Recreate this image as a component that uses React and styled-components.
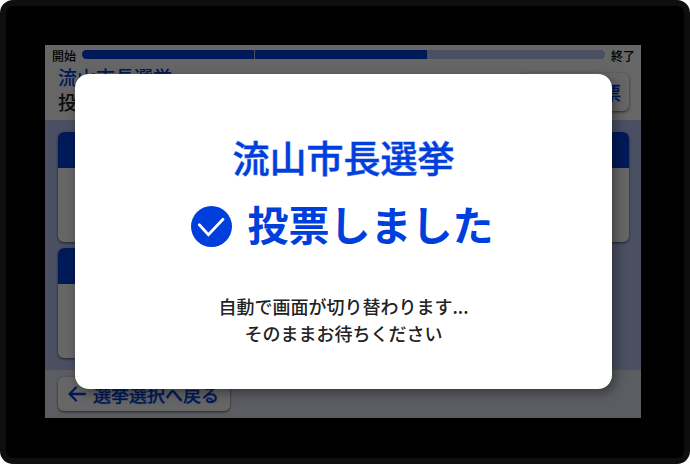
import React from 'react'
import styled, { createGlobalStyle } from 'styled-components'

const BLUE = '#003fdc'

const steps = [
  { share: 33, done: true },
  { share: 33, done: true },
  { share: 34, done: false }
]

const candidates = [1, 2, 3, 4, 5]

const CheckIcon = () => (
  <Check width="41" height="41" viewBox="0 0 41 41" aria-hidden="true">
    <circle cx="20.5" cy="20.5" r="20.5" fill={BLUE} />
    <path
      d="M8.3 18.8L17.4 28.6L32 13.2"
      fill="none"
      stroke="#fff"
      strokeWidth="2.8"
      strokeLinecap="round"
    />
  </Check>
)

const BackIcon = () => (
  <svg width="18" height="16" viewBox="0 0 18 16" aria-hidden="true">
    <path
      d="M8 1.5L1.6 8L8 14.5M1.6 8H16.8"
      fill="none"
      stroke={BLUE}
      strokeWidth="2.3"
      strokeLinecap="round"
      strokeLinejoin="round"
    />
  </svg>
)

const App = () => (
  <Device>
    <GlobalStyle />
    <Screen>
      <Header>
        <Progress>
          <span>開始</span>
          <Track>
            {steps.map((step, i) => (
              <Step key={i} $share={step.share} $done={step.done} />
            ))}
          </Track>
          <span>終了</span>
        </Progress>
        <HeaderRow>
          <Heading>
            <Election>流山市長選挙</Election>
            <Guide>投票先を選んでください</Guide>
          </Heading>
          <BlankButton>白票で投票</BlankButton>
        </HeaderRow>
      </Header>
      <Candidates>
        {candidates.map(id => (
          <Card key={id}>
            <CardHead />
          </Card>
        ))}
      </Candidates>
      <Footer>
        <BackButton>
          <BackIcon />
          選挙選択へ戻る
        </BackButton>
      </Footer>
      <Overlay>
        <Modal role="dialog" aria-modal="true" aria-labelledby="result">
          <ModalTitle>流山市長選挙</ModalTitle>
          <Result id="result">
            <CheckIcon />
            投票しました
          </Result>
          <Note>
            自動で画面が切り替わります...
            <br />
            そのままお待ちください
          </Note>
        </Modal>
      </Overlay>
    </Screen>
  </Device>
)

export default App

const GlobalStyle = createGlobalStyle`
  * {
    box-sizing: border-box;
  }
  body {
    margin: 0;
    background: #fff;
    font-family: "Noto Sans CJK JP", sans-serif;
    color: #222;
  }
  h1, h2, p {
    margin: 0;
  }
`

const Device = styled.div`
  display: flex;
  min-height: 100vh;
  padding: 39px 43px 40px 39px;
  border: 6px solid #0e0e0e;
  border-radius: 13px;
  background: #000;
`

const Screen = styled.main`
  position: relative;
  flex: 1;
  display: flex;
  flex-direction: column;
  background: #fff;
`

const Header = styled.header`
  padding: 3px 12px 6px 7px;
`

const Progress = styled.div`
  display: flex;
  align-items: center;
  gap: 6px;
  margin-right: -6px;
  font-size: 12px;
  line-height: 16px;
  font-weight: 500;
  color: #000;
`

const Track = styled.div`
  flex: 1;
  display: flex;
  gap: 1px;
  height: 9px;
  margin-bottom: 3px;
  border-radius: 5px;
  overflow: hidden;
  background: #b9c8f5;
`

const Step = styled.div`
  flex: ${props => props.$share};
  background: ${props => (props.$done ? BLUE : '#b9c8f5')};
`

const HeaderRow = styled.div`
  display: flex;
  justify-content: space-between;
  align-items: flex-end;
  padding-left: 6px;
`

const Heading = styled.div`
  font-size: 19px;
  line-height: 25px;
  font-weight: 500;
`

const Election = styled.p`
  color: ${BLUE};
`

const Guide = styled.p`
  color: #222;
`

const Button = styled.button`
  display: flex;
  align-items: center;
  border: 0;
  border-radius: 6px;
  background: #fff;
  box-shadow: 0 1px 3px rgba(0, 0, 0, 0.6);
  font-family: inherit;
  font-size: 18px;
  font-weight: 500;
  color: ${BLUE};
  -webkit-text-stroke: 1px rgba(0, 63, 220, 0.3);
  cursor: pointer;
`

const BlankButton = styled(Button)`
  height: 38px;
  margin-bottom: 3px;
  padding: 0 8px 0 12px;
`

const Candidates = styled.section`
  flex: 1;
  display: grid;
  grid-template-columns: repeat(3, 1fr);
  grid-auto-rows: 110px;
  gap: 6px;
  padding: 12px 12px 12px 13px;
  background: #b9c8f5;
`

const Card = styled.article`
  border-radius: 6px;
  overflow: hidden;
  background: #fff;
  box-shadow: 0 1px 3px rgba(0, 0, 0, 0.6);
`

const CardHead = styled.div`
  height: 36px;
  background: ${BLUE};
`

const Footer = styled.footer`
  display: flex;
  padding: 7px 13px;
  background: #e4e9f6;
`

const BackButton = styled(Button)`
  gap: 7px;
  height: 34px;
  padding: 0 11px 0 10px;
`

const Overlay = styled.div`
  position: absolute;
  inset: 0;
  display: flex;
  padding: 29px 29px 29px 30px;
  background: rgba(0, 0, 0, 0.6);
`

const Modal = styled.section`
  flex: 1;
  display: flex;
  flex-direction: column;
  align-items: center;
  padding-top: 59px;
  border-radius: 14px;
  background: #fff;
  box-shadow: 3px 4px 12px rgba(0, 0, 0, 0.4);
`

const ModalTitle = styled.h1`
  font-size: 37px;
  line-height: 48px;
  font-weight: 500;
  color: ${BLUE};
  -webkit-text-stroke: 1px rgba(0, 63, 220, 0.5);
`

const Result = styled.h2`
  display: flex;
  align-items: center;
  gap: 16px;
  margin-top: 14px;
  padding-right: 3px;
  font-size: 41px;
  line-height: 56px;
  font-weight: 700;
  color: ${BLUE};
`

const Check = styled.svg`
  margin-top: 6px;
`

const Note = styled.p`
  margin-top: 42px;
  font-size: 18px;
  line-height: 27px;
  font-weight: 500;
  text-align: center;
`
